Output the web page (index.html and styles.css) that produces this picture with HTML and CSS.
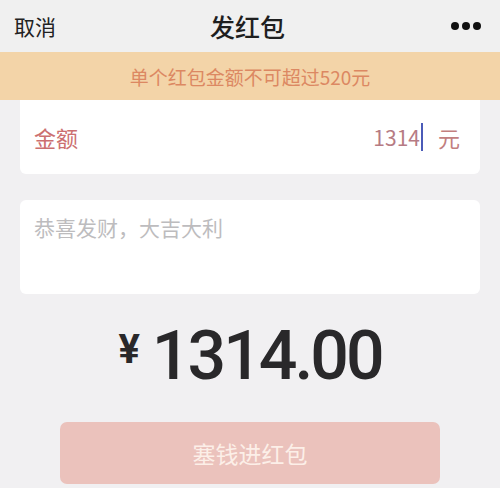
FILE: index.html
```html
<!DOCTYPE html>
<html lang="zh-CN">
<head>
<meta charset="utf-8">
<link rel="stylesheet" href="styles.css">
</head>
<body>
<div class="page">
  <header class="nav">
    <span class="nav-left">取消</span>
    <span class="nav-title">发红包</span>
    <span class="nav-more"><i></i><i></i><i></i></span>
  </header>
  <div class="notice">单个红包金额不可超过520元</div>
  <div class="card amount-card">
    <span class="label">金额</span>
    <span class="value"><span class="num">1314</span><span class="cursor"></span><span class="unit">元</span></span>
  </div>
  <div class="card msg-card">
    <span class="placeholder">恭喜发财，大吉大利</span>
  </div>
  <div class="total"><span class="yen">¥</span><span class="big">1314.00</span></div>
  <div class="btn">塞钱进红包</div>
</div>
</body>
</html>
```
FILE: styles.css
```css
html, body {
  margin: 0;
  padding: 0;
}
body {
  background: #f1f0f2;
  font-family: "Noto Sans CJK SC", "Noto Sans", sans-serif;
  width: 500px;
  height: 488px;
  overflow: hidden;
}
.page {
  display: flex;
  flex-direction: column;
}
.nav {
  height: 52px;
  background: #f0f0f0;
  display: grid;
  grid-template-columns: 1fr auto 1fr;
  align-items: center;
  padding: 0 19px 0 14px;
}
.nav-left {
  font-size: 21px;
  color: #222;
  justify-self: start;
}
.nav-title {
  font-size: 25px;
  color: #1f1f1f;
  font-weight: 500;
}
.nav-more {
  justify-self: end;
  display: flex;
  gap: 3px;
}
.nav-more i {
  width: 8px;
  height: 8px;
  border-radius: 50%;
  background: #111;
}
.notice {
  height: 48px;
  background: #f3d4a8;
  color: #dc8862;
  font-size: 19px;
  display: flex;
  align-items: center;
  justify-content: center;
}
.card {
  background: #fff;
  margin: 0 20px;
  border-radius: 6px;
}
.amount-card {
  height: 74px;
  border-radius: 0 0 6px 6px;
  display: flex;
  align-items: center;
  justify-content: space-between;
  padding: 0 20px 0 14px;
}
.label {
  font-size: 22px;
  color: #cc6f70;
}
.value {
  display: flex;
  align-items: center;
}
.num {
  font-size: 21px;
  color: #b67b84;
}
.cursor {
  width: 2px;
  height: 28px;
  background: #4b5bb8;
  margin: 0 15px 0 1px;
}
.unit {
  font-size: 22px;
  color: #c27f7f;
}
.msg-card {
  margin-top: 26px;
  height: 94px;
  padding: 12px 14px 0;
  box-sizing: border-box;
}
.placeholder {
  font-size: 21px;
  color: #bdbcbe;
}
.total {
  margin-top: 22px;
  height: 80px;
  display: flex;
  justify-content: center;
  align-items: center;
  color: #29282a;
  font-family: Roboto, "Noto Sans", sans-serif;
  font-weight: 500;
}
.yen {
  font-size: 40px;
  font-weight: 700;
  margin-right: 12px;
  margin-bottom: 14px;
}
.big {
  font-size: 68px;
  letter-spacing: -3px;
  line-height: 1;
}
.btn {
  margin: 26px 60px 0;
  height: 62px;
  border-radius: 7px;
  background: #ebc2bc;
  color: #fcefe8;
  font-size: 23px;
  display: flex;
  align-items: center;
  justify-content: center;
}
```
